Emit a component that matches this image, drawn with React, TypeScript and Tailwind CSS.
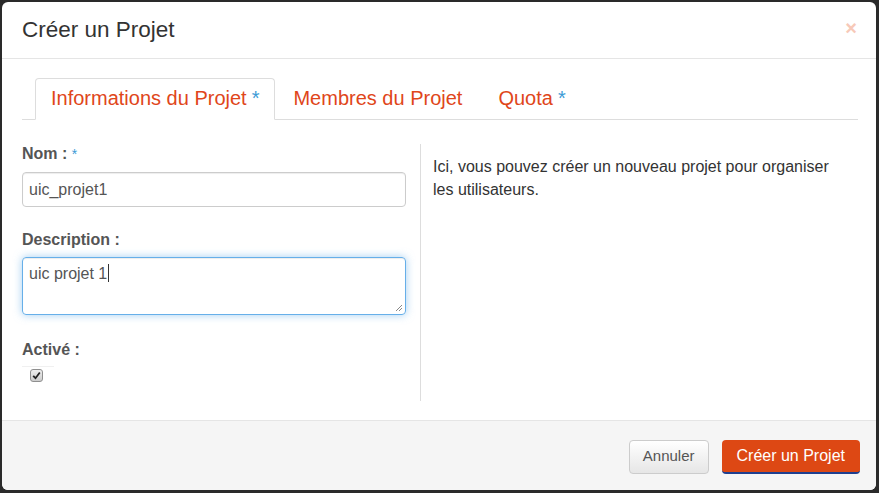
import React from "react";

const font = { fontFamily: '"Liberation Sans", Arial, Helvetica, sans-serif' };

export default function App() {
  return (
    <div className="w-[879px] h-[493px] bg-[#2a2a2a] pt-[2px] pl-[2px] overflow-hidden" style={font}>
      <div className="w-[874px] h-[488px] bg-white rounded-[6px] flex flex-col overflow-hidden">
        {/* Header */}
        <div className="h-[57px] shrink-0 border-b border-[#e5e5e5] flex items-center justify-between pl-[20px] pr-[19px]">
          <h4 className="text-[22.5px] leading-[26px] text-[#333] mt-[-1px]">Créer un Projet</h4>
          <span className="text-[#f7c9b8] text-[20px] font-bold leading-none mt-[-4px]">×</span>
        </div>

        {/* Body */}
        <div className="flex-1 px-[20px] pt-[19px]">
          {/* Tabs */}
          <div className="flex border-b border-[#ddd] h-[42px] pl-[13px] w-[836px]">
            <div className="h-[42px] px-[15px] pb-[3px] border border-[#ddd] border-b-white rounded-t-[4px] bg-white flex items-center text-[20px] text-[#e0461a] mr-[4px]">
              Informations du Projet<span className="text-[#3c9bd6] ml-[5px]">*</span>
            </div>
            <div className="h-[41px] pb-[2px] pr-[15px] flex items-center text-[20px] text-[#e0461a] mr-[5px] pl-[14px]">
              Membres du Projet
            </div>
            <div className="h-[41px] pb-[2px] px-[15px] flex items-center text-[20px] text-[#e0461a] pl-[16px]">
              Quota<span className="text-[#3c9bd6] ml-[5px]">*</span>
            </div>
          </div>

          {/* Content */}
          <div className="flex mt-[24px]">
            <div className="w-[398px] pr-[14px] h-[257px]">
              <div className="text-[16px] leading-[20px] font-bold text-[#555]">
                Nom : <span className="text-[#3c9bd6] font-normal text-[14px] align-top">*</span>
              </div>
              <div className="mt-[8px] h-[35px] border border-[#ccc] rounded-[4px] flex items-center px-[6px] text-[16px] text-[#555] shadow-[inset_0_1px_1px_rgba(0,0,0,0.075)]">
                uic_projet1
              </div>
              <div className="mt-[23px] text-[16px] leading-[20px] font-bold text-[#555]">Description :</div>
              <div className="mt-[7px] h-[58px] border border-[#66afe9] rounded-[4px] px-[6px] pt-[6px] text-[16px] leading-[20px] text-[#555] relative shadow-[inset_0_1px_1px_rgba(0,0,0,0.075),0_0_8px_rgba(102,175,233,0.6)]">
                uic projet 1<span className="inline-block w-[1px] h-[18px] bg-[#333] align-middle ml-[1px] mt-[-3px]"></span>
                <svg className="absolute right-[2px] bottom-[2px]" width="9" height="9" viewBox="0 0 9 9">
                  <path d="M8 2 L2 8 M8 5 L5 8" stroke="#888" strokeWidth="1" />
                </svg>
              </div>
              <div className="mt-[25px] text-[16px] leading-[20px] font-bold text-[#555]">Activé :</div>
              <div className="mt-[6px] ml-0 w-[32px] h-[17px] border-t border-[#f0f0f0] flex items-center pl-[8px]">
                <div className="w-[13px] h-[13px] rounded-[3px] border border-[#8f8f8f] bg-gradient-to-b from-[#eee] to-[#ccc] flex items-center justify-center">
                  <svg width="9" height="9" viewBox="0 0 9 9">
                    <path d="M1.2 4.8 L3.5 7.2 L7.8 1.5" stroke="#222" strokeWidth="1.8" fill="none" />
                  </svg>
                </div>
              </div>
            </div>
            <div className="flex-1 border-l border-[#ddd] pl-[12px] pt-[11px] h-[257px]">
              <p className="text-[16px] leading-[23px] text-[#333] w-[420px]">
                Ici, vous pouvez créer un nouveau projet pour organiser les utilisateurs.
              </p>
            </div>
          </div>
        </div>

        {/* Footer */}
        <div className="h-[70px] shrink-0 border-t border-[#e5e5e5] bg-[#f5f5f5] flex items-center justify-end pr-[16px] gap-[13px] pt-[2px]">
          <button className="h-[34px] px-[13px] rounded-[4px] border border-[#ccc] bg-gradient-to-b from-white to-[#e6e6e6] text-[15px] text-[#555]">
            Annuler
          </button>
          <button className="h-[34px] px-[15px] rounded-[4px] bg-[#dd4814] border-b-2 border-[#1f3f8f] text-[16px] text-white">
            Créer un Projet
          </button>
        </div>
      </div>
    </div>
  );
}
